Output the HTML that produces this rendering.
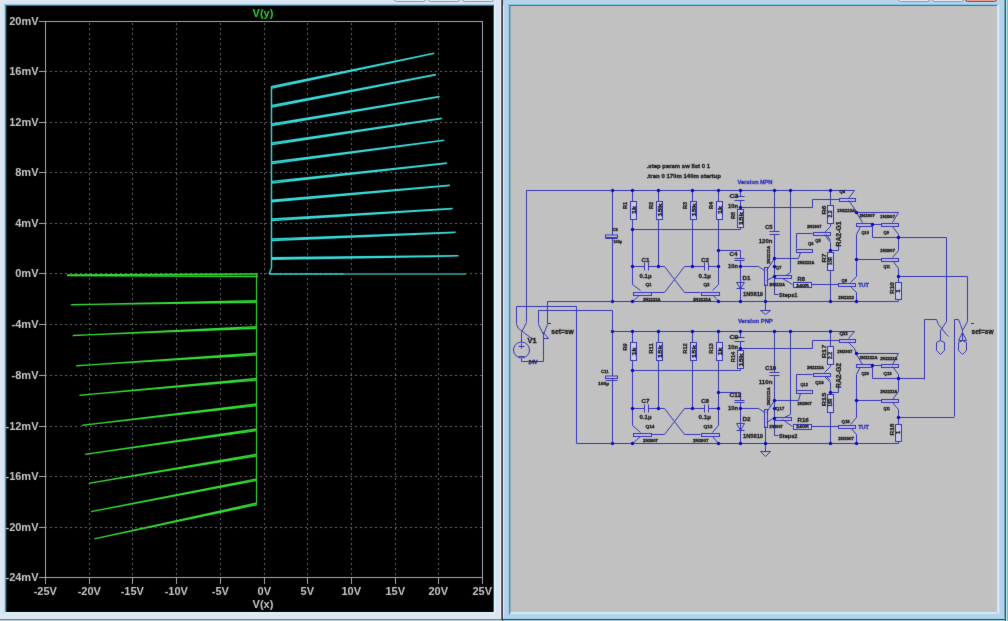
<!DOCTYPE html><html><head><meta charset="utf-8"><style>
html,body{margin:0;padding:0;background:#c6dcec;overflow:hidden}
svg{display:block}

text{font-family:"Liberation Sans",sans-serif}
</style></head><body>
<div id="w"><svg width="1008" height="621" viewBox="0 0 1008 621">
<defs><filter id="bl" color-interpolation-filters="sRGB" x="0" y="0" width="1008" height="621" filterUnits="userSpaceOnUse"><feConvolveMatrix order="3" kernelMatrix="0.01 0.06 0.01 0.06 0.72 0.06 0.01 0.06 0.01" edgeMode="duplicate" preserveAlpha="true"/></filter></defs><g filter="url(#bl)">

<rect x="0" y="0" width="1008" height="621" fill="#d8e4ee"/>
<rect x="0" y="0" width="501" height="619" fill="#dce5f0"/>
<rect x="3" y="3" width="1" height="610" fill="#cce8f4"/>
<rect x="4" y="4" width="1" height="609" fill="#b0e0fc"/>
<rect x="5" y="5" width="1" height="607" fill="#5a8aa0"/>
<rect x="6" y="6" width="1" height="606" fill="#1a2a2a"/>
<rect x="3" y="3" width="491" height="1" fill="#cde9f7"/>
<rect x="4" y="4" width="490" height="1" fill="#8ec8e6"/>
<rect x="5" y="5" width="489" height="1" fill="#3a7090"/>
<rect x="493" y="5" width="1" height="607" fill="#405060"/>
<rect x="494" y="5" width="1" height="608" fill="#e0fcff"/>
<rect x="495" y="5" width="1" height="608" fill="#d8eef0"/>
<rect x="498" y="0" width="2" height="619" fill="#e0e4fa"/>
<rect x="500" y="0" width="1" height="619" fill="#eef4fc"/>
<rect x="6" y="612" width="488" height="1" fill="#e0fcff"/>
<rect x="6" y="613" width="488" height="1" fill="#dcf2f8"/>
<rect x="0" y="618" width="501" height="1" fill="#e8ecfa"/>
<rect x="0" y="619" width="501" height="1" fill="#707888"/>
<rect x="0" y="620" width="502" height="1" fill="#b0d4dc"/>
<rect x="501" y="0" width="1" height="620" fill="#606868"/>
<rect x="502" y="0" width="1" height="621" fill="#383c40"/>
<rect x="394.5" y="-3.5" width="31" height="5" rx="2" fill="#e8edf5" stroke="#8a96a4" stroke-width="1"/>
<rect x="428.5" y="-3.5" width="31" height="5" rx="2" fill="#e8edf5" stroke="#8a96a4" stroke-width="1"/>
<rect x="462.5" y="-3.5" width="31" height="5" rx="2" fill="#e8edf5" stroke="#8a96a4" stroke-width="1"/>
<rect x="7" y="6" width="486" height="606" fill="#000"/>
<rect x="503" y="0" width="505" height="621" fill="#b8d0ec"/>
<rect x="503" y="0" width="1" height="620" fill="#eef2fc"/>
<rect x="507" y="0" width="1" height="620" fill="#b0d4ec"/>
<rect x="508" y="4" width="1" height="612" fill="#90d0ec"/>
<rect x="509" y="5" width="1" height="609" fill="#5090a0"/>
<rect x="510" y="6" width="1" height="606" fill="#90a8b0"/>
<rect x="503" y="0" width="502" height="5" fill="#b8d4e8"/>
<rect x="508" y="4" width="490" height="1" fill="#80c8e8"/>
<rect x="509" y="5" width="488" height="1" fill="#407090"/>
<rect x="997" y="5" width="1" height="608" fill="#d0e4f0"/>
<rect x="998" y="5" width="1" height="609" fill="#d0f0fc"/>
<rect x="999" y="5" width="1" height="609" fill="#b8dcf0"/>
<rect x="1003" y="0" width="1" height="620" fill="#b0d8ec"/>
<rect x="1004" y="0" width="1" height="620" fill="#70a8b8"/>
<rect x="1005" y="0" width="1" height="621" fill="#1a5060"/>
<rect x="1006" y="0" width="1" height="621" fill="#c8f4fc"/>
<rect x="1007" y="0" width="1" height="621" fill="#90b0c8"/>
<rect x="511" y="612" width="486" height="1" fill="#c8f0fa"/>
<rect x="511" y="613" width="486" height="1" fill="#c8ecf8"/>
<rect x="503" y="618" width="502" height="1" fill="#a8d8ec"/>
<rect x="503" y="619" width="502" height="1" fill="#0e4a5a"/>
<rect x="503" y="620" width="502" height="1" fill="#a8e0ea"/>
<rect x="898.5" y="-3.5" width="31" height="5" rx="2" fill="#e8edf5" stroke="#8a96a4" stroke-width="1"/>
<rect x="932.5" y="-3.5" width="31" height="5" rx="2" fill="#e8edf5" stroke="#8a96a4" stroke-width="1"/>
<rect x="965.5" y="-3.5" width="31" height="5" rx="2" fill="#eaa39c" stroke="#8a4a48" stroke-width="1"/>
<rect x="511" y="6" width="486" height="606" fill="#c1c1c1"/>
<line x1="46" y1="71.5" x2="482" y2="71.5" stroke="#626262" stroke-width="1" stroke-dasharray="2 3" stroke-dashoffset="-4"/>
<line x1="46" y1="122.5" x2="482" y2="122.5" stroke="#626262" stroke-width="1" stroke-dasharray="2 3" stroke-dashoffset="-4"/>
<line x1="46" y1="172.5" x2="482" y2="172.5" stroke="#626262" stroke-width="1" stroke-dasharray="2 3" stroke-dashoffset="-4"/>
<line x1="46" y1="223.5" x2="482" y2="223.5" stroke="#626262" stroke-width="1" stroke-dasharray="2 3" stroke-dashoffset="-4"/>
<line x1="46" y1="273.5" x2="482" y2="273.5" stroke="#626262" stroke-width="1" stroke-dasharray="2 3" stroke-dashoffset="-4"/>
<line x1="46" y1="324.5" x2="482" y2="324.5" stroke="#626262" stroke-width="1" stroke-dasharray="2 3" stroke-dashoffset="-4"/>
<line x1="46" y1="375.5" x2="482" y2="375.5" stroke="#626262" stroke-width="1" stroke-dasharray="2 3" stroke-dashoffset="-4"/>
<line x1="46" y1="426.5" x2="482" y2="426.5" stroke="#626262" stroke-width="1" stroke-dasharray="2 3" stroke-dashoffset="-4"/>
<line x1="46" y1="476.5" x2="482" y2="476.5" stroke="#626262" stroke-width="1" stroke-dasharray="2 3" stroke-dashoffset="-4"/>
<line x1="46" y1="527.5" x2="482" y2="527.5" stroke="#626262" stroke-width="1" stroke-dasharray="2 3" stroke-dashoffset="-4"/>
<line x1="89.5" y1="22" x2="89.5" y2="577" stroke="#626262" stroke-width="1" stroke-dasharray="2 3" stroke-dashoffset="-1"/>
<line x1="132.5" y1="22" x2="132.5" y2="577" stroke="#626262" stroke-width="1" stroke-dasharray="2 3" stroke-dashoffset="-1"/>
<line x1="176.5" y1="22" x2="176.5" y2="577" stroke="#626262" stroke-width="1" stroke-dasharray="2 3" stroke-dashoffset="-1"/>
<line x1="220.5" y1="22" x2="220.5" y2="577" stroke="#626262" stroke-width="1" stroke-dasharray="2 3" stroke-dashoffset="-1"/>
<line x1="264.5" y1="22" x2="264.5" y2="577" stroke="#626262" stroke-width="1" stroke-dasharray="2 3" stroke-dashoffset="-1"/>
<line x1="307.5" y1="22" x2="307.5" y2="577" stroke="#626262" stroke-width="1" stroke-dasharray="2 3" stroke-dashoffset="-1"/>
<line x1="351.5" y1="22" x2="351.5" y2="577" stroke="#626262" stroke-width="1" stroke-dasharray="2 3" stroke-dashoffset="-1"/>
<line x1="395.5" y1="22" x2="395.5" y2="577" stroke="#626262" stroke-width="1" stroke-dasharray="2 3" stroke-dashoffset="-1"/>
<line x1="438.5" y1="22" x2="438.5" y2="577" stroke="#626262" stroke-width="1" stroke-dasharray="2 3" stroke-dashoffset="-1"/>
<rect x="45.5" y="21.5" width="437" height="556" fill="none" stroke="#a8a8a8" stroke-width="1"/>
<line x1="39" y1="21.5" x2="45" y2="21.5" stroke="#a8a8a8" stroke-width="1"/>
<line x1="39" y1="71.5" x2="45" y2="71.5" stroke="#a8a8a8" stroke-width="1"/>
<line x1="39" y1="122.5" x2="45" y2="122.5" stroke="#a8a8a8" stroke-width="1"/>
<line x1="39" y1="172.5" x2="45" y2="172.5" stroke="#a8a8a8" stroke-width="1"/>
<line x1="39" y1="223.5" x2="45" y2="223.5" stroke="#a8a8a8" stroke-width="1"/>
<line x1="39" y1="273.5" x2="45" y2="273.5" stroke="#a8a8a8" stroke-width="1"/>
<line x1="39" y1="324.5" x2="45" y2="324.5" stroke="#a8a8a8" stroke-width="1"/>
<line x1="39" y1="375.5" x2="45" y2="375.5" stroke="#a8a8a8" stroke-width="1"/>
<line x1="39" y1="426.5" x2="45" y2="426.5" stroke="#a8a8a8" stroke-width="1"/>
<line x1="39" y1="476.5" x2="45" y2="476.5" stroke="#a8a8a8" stroke-width="1"/>
<line x1="39" y1="527.5" x2="45" y2="527.5" stroke="#a8a8a8" stroke-width="1"/>
<line x1="39" y1="577.5" x2="45" y2="577.5" stroke="#a8a8a8" stroke-width="1"/>
<line x1="45.5" y1="577" x2="45.5" y2="584" stroke="#a8a8a8" stroke-width="1"/>
<line x1="89.5" y1="577" x2="89.5" y2="584" stroke="#a8a8a8" stroke-width="1"/>
<line x1="132.5" y1="577" x2="132.5" y2="584" stroke="#a8a8a8" stroke-width="1"/>
<line x1="176.5" y1="577" x2="176.5" y2="584" stroke="#a8a8a8" stroke-width="1"/>
<line x1="220.5" y1="577" x2="220.5" y2="584" stroke="#a8a8a8" stroke-width="1"/>
<line x1="264.5" y1="577" x2="264.5" y2="584" stroke="#a8a8a8" stroke-width="1"/>
<line x1="307.5" y1="577" x2="307.5" y2="584" stroke="#a8a8a8" stroke-width="1"/>
<line x1="351.5" y1="577" x2="351.5" y2="584" stroke="#a8a8a8" stroke-width="1"/>
<line x1="395.5" y1="577" x2="395.5" y2="584" stroke="#a8a8a8" stroke-width="1"/>
<line x1="438.5" y1="577" x2="438.5" y2="584" stroke="#a8a8a8" stroke-width="1"/>
<line x1="482.5" y1="577" x2="482.5" y2="584" stroke="#a8a8a8" stroke-width="1"/>
<text x="38.5" y="24.6" font-size="11" fill="#c8c8c8" text-anchor="end" font-weight="bold">20mV</text>
<text x="38.5" y="74.6" font-size="11" fill="#c8c8c8" text-anchor="end" font-weight="bold">16mV</text>
<text x="38.5" y="125.6" font-size="11" fill="#c8c8c8" text-anchor="end" font-weight="bold">12mV</text>
<text x="38.5" y="175.6" font-size="11" fill="#c8c8c8" text-anchor="end" font-weight="bold">8mV</text>
<text x="38.5" y="226.6" font-size="11" fill="#c8c8c8" text-anchor="end" font-weight="bold">4mV</text>
<text x="38.5" y="276.6" font-size="11" fill="#c8c8c8" text-anchor="end" font-weight="bold">0mV</text>
<text x="38.5" y="327.6" font-size="11" fill="#c8c8c8" text-anchor="end" font-weight="bold">-4mV</text>
<text x="38.5" y="378.6" font-size="11" fill="#c8c8c8" text-anchor="end" font-weight="bold">-8mV</text>
<text x="38.5" y="429.6" font-size="11" fill="#c8c8c8" text-anchor="end" font-weight="bold">-12mV</text>
<text x="38.5" y="479.6" font-size="11" fill="#c8c8c8" text-anchor="end" font-weight="bold">-16mV</text>
<text x="38.5" y="530.6" font-size="11" fill="#c8c8c8" text-anchor="end" font-weight="bold">-20mV</text>
<text x="38.5" y="580.6" font-size="11" fill="#c8c8c8" text-anchor="end" font-weight="bold">-24mV</text>
<text x="45.3" y="594.5" font-size="11" fill="#c8c8c8" text-anchor="middle" font-weight="bold">-25V</text>
<text x="89.3" y="594.5" font-size="11" fill="#c8c8c8" text-anchor="middle" font-weight="bold">-20V</text>
<text x="132.3" y="594.5" font-size="11" fill="#c8c8c8" text-anchor="middle" font-weight="bold">-15V</text>
<text x="176.3" y="594.5" font-size="11" fill="#c8c8c8" text-anchor="middle" font-weight="bold">-10V</text>
<text x="220.3" y="594.5" font-size="11" fill="#c8c8c8" text-anchor="middle" font-weight="bold">-5V</text>
<text x="264.3" y="594.5" font-size="11" fill="#c8c8c8" text-anchor="middle" font-weight="bold">0V</text>
<text x="307.3" y="594.5" font-size="11" fill="#c8c8c8" text-anchor="middle" font-weight="bold">5V</text>
<text x="351.3" y="594.5" font-size="11" fill="#c8c8c8" text-anchor="middle" font-weight="bold">10V</text>
<text x="395.3" y="594.5" font-size="11" fill="#c8c8c8" text-anchor="middle" font-weight="bold">15V</text>
<text x="438.3" y="594.5" font-size="11" fill="#c8c8c8" text-anchor="middle" font-weight="bold">20V</text>
<text x="482.3" y="594.5" font-size="11" fill="#c8c8c8" text-anchor="middle" font-weight="bold">25V</text>
<text x="263" y="608.3" font-size="11" fill="#c8c8c8" text-anchor="middle" font-weight="bold">V(x)</text>
<text x="263" y="17" font-size="11" fill="#30d030" text-anchor="middle" font-weight="bold">V(y)</text>
<path d="M272,86.5 L434.4,53.1 M272,88.1 L434.4,53.4 M272,105.5 L435.9,74.4 M272,107.1 L435.9,74.7 M272,124 L439.6,96.4 M272,125.6 L439.6,96.7 M272,143 L441.9,118.3 M272,144.6 L441.9,118.6 M272,162 L444.4,140.1 M272,163.6 L444.4,140.4 M272,181.4 L447.2,163 M272,183.0 L447.2,163.3 M272,200.2 L450,185.2 M272,201.79999999999998 L450,185.5 M272,219 L452.8,208.5 M272,220.6 L452.8,208.8 M272,238.9 L455.6,232.3 M272,240.5 L455.6,232.60000000000002 M272,257.7 L458.5,255.7 M272,259.3 L458.5,256.0 " stroke="#38dcdc" stroke-width="1.4" fill="none"/>
<path d="M271.5,86 L271.5,268 L269,274" stroke="#38dcdc" stroke-width="1.4" fill="none"/>
<path d="M269,274 L344,274" stroke="#38dcdc" stroke-width="1.6" fill="none"/>
<path d="M344,274 L466,274" stroke="#2c7c7c" stroke-width="2" fill="none"/>
<path d="M70.8,304.9 L257,300.6 M71.8,304.7 L257,302.20000000000005 M72.6,335.6 L257,326.6 M73.6,335.40000000000003 L257,328.20000000000005 M76,365.8 L257,353.2 M77,365.6 L257,354.8 M79.4,395.3 L257,378.5 M80.4,395.1 L257,380.1 M82.1,425.4 L257,404 M83.1,425.2 L257,405.6 M85,454.3 L257,429 M86,454.1 L257,430.6 M88.8,483.3 L257,454.2 M89.8,483.1 L257,455.8 M91,511.6 L257,478.8 M92,511.40000000000003 L257,480.40000000000003 M94.2,538.9 L257,503 M95.2,538.6999999999999 L257,504.6 " stroke="#34dc34" stroke-width="1.35" fill="none"/>
<path d="M67,275 L258,274 M67,275.5 L258,276.5" stroke="#34dc34" stroke-width="1.3" fill="none"/>
<path d="M256.5,274 L256.5,503" stroke="#3ccc3c" stroke-width="1.2" fill="none"/>
<g stroke="#3636b8" stroke-width="1" fill="none">
<path d="M612.5,190.5 L854.5,190.5"/>
<path d="M612.5,190.5 L612.5,301.5"/>
<rect x="605.5" y="235" width="12" height="2.5" fill="#c1c1c1"/>
<path d="M605.5,238.5 L617.5,238.5"/>
<path d="M632.5,190.5 L632.5,284.5 L640.5,290.5"/>
<path d="M658.5,190.5 L658.5,266.5"/>
<path d="M692.5,190.5 L692.5,266.5"/>
<path d="M718.5,190.5 L718.5,284.5 L712.5,290.5"/>
<path d="M740.5,190.5 L740.5,196.5"/>
<path d="M740.5,200.5 L740.5,229.5"/>
<path d="M632.5,229.5 L740.5,229.5"/>
<path d="M740.5,207.5 L812.5,207.5 L812.5,199.5 L854.5,199.5"/>
<path d="M632.5,266.5 L644.5,266.5"/>
<path d="M648.5,266.5 L658.5,266.5"/>
<path d="M692.5,266.5 L704.5,266.5"/>
<path d="M708.5,266.5 L718.5,266.5"/>
<path d="M644.5,262.5 L644.5,270.5"/>
<path d="M648.5,262.5 L648.5,270.5"/>
<path d="M704.5,262.5 L704.5,270.5"/>
<path d="M708.5,262.5 L708.5,270.5"/>
<path d="M658.5,266.5 L664.5,266.5 L684.5,292.5 L700.5,292.5"/>
<path d="M692.5,266.5 L684.5,266.5 L664.5,292.5 L650.5,292.5"/>
<path d="M640.5,294.5 L632.5,301.5"/>
<path d="M712.5,294.5 L718.5,301.5"/>
<path d="M632.5,292.5 L632.5,292.5"/>
<path d="M718.5,250.5 L740.5,250.5 L740.5,258.5"/>
<path d="M740.5,260.5 L740.5,301.5"/>
<path d="M734.5,258.5 L744.5,258.5"/>
<path d="M734.5,260.5 L744.5,260.5"/>
<path d="M734.5,196.5 L744.5,196.5"/>
<path d="M734.5,200.5 L744.5,200.5"/>
<path d="M736.5,282.5 L744.5,282.5 L740.5,288.5 L736.5,282.5"/>
<path d="M736.5,288.5 L744.5,288.5"/>
<path d="M740.5,266.5 L758.5,266.5 L764.5,270.5"/>
<rect x="764.5" y="267.5" width="3" height="18" fill="#b8b8dc"/>
<path d="M765.5,284.5 L765.5,301.5"/>
<path d="M766.5,270.5 L774.5,258.5"/>
<path d="M766.5,280.5 L774.5,276.5"/>
<path d="M774.5,190.5 L774.5,231.5"/>
<path d="M774.5,234.5 L774.5,294.5 L778.5,294.5"/>
<path d="M769.5,231.5 L779.5,231.5"/>
<path d="M769.5,234.5 L779.5,234.5"/>
<path d="M790.5,190.5 L790.5,272.5 L784.5,276.5"/>
<rect x="774.5" y="275.5" width="17" height="3" fill="#b8b8dc"/>
<path d="M774.5,258.5 L798.5,258.5"/>
<path d="M782.5,278.5 L792.5,284.5"/>
<rect x="796.5" y="249.5" width="16" height="3" fill="#b8b8dc"/>
<rect x="813.5" y="232.5" width="17" height="3" fill="#b8b8dc"/>
<path d="M796.5,233.5 L796.5,248.5"/>
<path d="M796.5,233.5 L812.5,233.5"/>
<path d="M800.5,252.5 L798.5,258.5"/>
<path d="M826.5,234.5 L830.5,240.5"/>
<path d="M830.5,190.5 L830.5,226.5 L824.5,232.5"/>
<path d="M824.5,234.5 L830.5,242.5 L830.5,301.5"/>
<path d="M830.5,250.5 L838.5,250.5 L838.5,244.5"/>
<rect x="839.5" y="198.5" width="16" height="3" fill="#b8b8dc"/>
<path d="M854.5,190.5 L848.5,198.5"/>
<path d="M848.5,200.5 L854.5,208.5 L856.5,212.5 L862.5,222.5"/>
<path d="M860.5,226.5 L856.5,234.5 L856.5,276.5 L850.5,282.5"/>
<path d="M850.5,286.5 L856.5,292.5 L856.5,301.5"/>
<path d="M856.5,212.5 L898.5,212.5"/>
<rect x="856.5" y="223.5" width="16" height="3" fill="#b8b8dc"/>
<rect x="881.5" y="223.5" width="17" height="3" fill="#b8b8dc"/>
<path d="M872.5,224.5 L881.5,224.5"/>
<path d="M872.5,224.5 L872.5,237.5 L946.5,237.5"/>
<path d="M898.5,212.5 L892.5,222.5"/>
<path d="M892.5,226.5 L898.5,234.5 L898.5,250.5 L892.5,257.5"/>
<path d="M892.5,260.5 L898.5,268.5 L898.5,301.5"/>
<rect x="881.5" y="258.5" width="17" height="3" fill="#b8b8dc"/>
<path d="M856.5,259.5 L881.5,259.5"/>
<path d="M898.5,276.5 L967.5,276.5"/>
<path d="M810.5,284.5 L838.5,284.5"/>
<rect x="838.5" y="283.5" width="17" height="3" fill="#b8b8dc"/>
<path d="M612.5,301.5 L898.5,301.5"/>
<path d="M765.5,301.5 L765.5,310.5"/>
<path d="M760.5,310.5 L770.5,310.5 L765.5,314.5 L760.5,310.5"/>
<rect x="633.5" y="292.5" width="18" height="3" fill="#b8b8dc"/>
<rect x="701.5" y="292.5" width="18" height="3" fill="#b8b8dc"/>
<rect x="630.5" y="201.5" width="6" height="18" fill="#cacae0"/>
<rect x="656.5" y="201.5" width="6" height="18" fill="#cacae0"/>
<rect x="690.5" y="201.5" width="6" height="18" fill="#cacae0"/>
<rect x="716.5" y="201.5" width="6" height="18" fill="#cacae0"/>
<rect x="737.5" y="209.5" width="6" height="18" fill="#cacae0"/>
<rect x="827.5" y="205.5" width="6" height="18" fill="#cacae0"/>
<rect x="827.5" y="252.5" width="6" height="18" fill="#cacae0"/>
<rect x="895.5" y="282.5" width="6" height="17" fill="#cacae0"/>
<rect x="793.5" y="282.5" width="18" height="5" fill="#cacae0"/>
<circle cx="612.5" cy="190.5" r="1.7" fill="#0808c0" stroke="none"/>
<circle cx="632.5" cy="190.5" r="1.7" fill="#0808c0" stroke="none"/>
<circle cx="658.5" cy="190.5" r="1.7" fill="#0808c0" stroke="none"/>
<circle cx="692.5" cy="190.5" r="1.7" fill="#0808c0" stroke="none"/>
<circle cx="718.5" cy="190.5" r="1.7" fill="#0808c0" stroke="none"/>
<circle cx="740.5" cy="190.5" r="1.7" fill="#0808c0" stroke="none"/>
<circle cx="774.5" cy="190.5" r="1.7" fill="#0808c0" stroke="none"/>
<circle cx="790.5" cy="190.5" r="1.7" fill="#0808c0" stroke="none"/>
<circle cx="830.5" cy="190.5" r="1.7" fill="#0808c0" stroke="none"/>
<circle cx="632.5" cy="229.5" r="1.7" fill="#0808c0" stroke="none"/>
<circle cx="632.5" cy="266.5" r="1.7" fill="#0808c0" stroke="none"/>
<circle cx="658.5" cy="266.5" r="1.7" fill="#0808c0" stroke="none"/>
<circle cx="692.5" cy="266.5" r="1.7" fill="#0808c0" stroke="none"/>
<circle cx="718.5" cy="266.5" r="1.7" fill="#0808c0" stroke="none"/>
<circle cx="718.5" cy="250.5" r="1.7" fill="#0808c0" stroke="none"/>
<circle cx="740.5" cy="207.5" r="1.7" fill="#0808c0" stroke="none"/>
<circle cx="740.5" cy="266.5" r="1.7" fill="#0808c0" stroke="none"/>
<circle cx="774.5" cy="258.5" r="1.7" fill="#0808c0" stroke="none"/>
<circle cx="774.5" cy="266.5" r="1.7" fill="#0808c0" stroke="none"/>
<circle cx="774.5" cy="276.5" r="1.7" fill="#0808c0" stroke="none"/>
<circle cx="612.5" cy="301.5" r="1.7" fill="#0808c0" stroke="none"/>
<circle cx="632.5" cy="301.5" r="1.7" fill="#0808c0" stroke="none"/>
<circle cx="718.5" cy="301.5" r="1.7" fill="#0808c0" stroke="none"/>
<circle cx="740.5" cy="301.5" r="1.7" fill="#0808c0" stroke="none"/>
<circle cx="765.5" cy="301.5" r="1.7" fill="#0808c0" stroke="none"/>
<circle cx="830.5" cy="301.5" r="1.7" fill="#0808c0" stroke="none"/>
<circle cx="856.5" cy="301.5" r="1.7" fill="#0808c0" stroke="none"/>
<circle cx="856.5" cy="212.5" r="1.7" fill="#0808c0" stroke="none"/>
<circle cx="898.5" cy="237.5" r="1.7" fill="#0808c0" stroke="none"/>
<circle cx="898.5" cy="276.5" r="1.7" fill="#0808c0" stroke="none"/>
<circle cx="830.5" cy="250.5" r="1.7" fill="#0808c0" stroke="none"/>
<circle cx="872.5" cy="224.5" r="1.7" fill="#0808c0" stroke="none"/>
<circle cx="856.5" cy="259.5" r="1.7" fill="#0808c0" stroke="none"/>
<path d="M612.5,331.5 L854.5,331.5"/>
<path d="M612.5,331.5 L612.5,443.5"/>
<rect x="605.5" y="376" width="12" height="2.5" fill="#c1c1c1"/>
<path d="M605.5,380.5 L617.5,380.5"/>
<path d="M632.5,331.5 L632.5,425.5 L640.5,432.5"/>
<path d="M658.5,331.5 L658.5,408.5"/>
<path d="M692.5,331.5 L692.5,408.5"/>
<path d="M718.5,331.5 L718.5,425.5 L712.5,432.5"/>
<path d="M740.5,331.5 L740.5,337.5"/>
<path d="M740.5,341.5 L740.5,370.5"/>
<path d="M632.5,370.5 L740.5,370.5"/>
<path d="M740.5,348.5 L812.5,348.5 L812.5,340.5 L854.5,340.5"/>
<path d="M632.5,408.5 L644.5,408.5"/>
<path d="M648.5,408.5 L658.5,408.5"/>
<path d="M692.5,408.5 L704.5,408.5"/>
<path d="M708.5,408.5 L718.5,408.5"/>
<path d="M644.5,404.5 L644.5,412.5"/>
<path d="M648.5,404.5 L648.5,412.5"/>
<path d="M704.5,404.5 L704.5,412.5"/>
<path d="M708.5,404.5 L708.5,412.5"/>
<path d="M658.5,408.5 L664.5,408.5 L684.5,434.5 L700.5,434.5"/>
<path d="M692.5,408.5 L684.5,408.5 L664.5,434.5 L650.5,434.5"/>
<path d="M640.5,436.5 L632.5,443.5"/>
<path d="M712.5,436.5 L718.5,443.5"/>
<path d="M632.5,434.5 L632.5,434.5"/>
<path d="M718.5,392.5 L740.5,392.5 L740.5,400.5"/>
<path d="M740.5,402.5 L740.5,443.5"/>
<path d="M734.5,400.5 L744.5,400.5"/>
<path d="M734.5,402.5 L744.5,402.5"/>
<path d="M734.5,337.5 L744.5,337.5"/>
<path d="M734.5,341.5 L744.5,341.5"/>
<path d="M736.5,423.5 L744.5,423.5 L740.5,430.5 L736.5,423.5"/>
<path d="M736.5,430.5 L744.5,430.5"/>
<path d="M740.5,408.5 L758.5,408.5 L764.5,412.5"/>
<rect x="764.5" y="409.5" width="3" height="18" fill="#b8b8dc"/>
<path d="M765.5,426.5 L765.5,443.5"/>
<path d="M766.5,412.5 L774.5,400.5"/>
<path d="M766.5,422.5 L774.5,417.5"/>
<path d="M774.5,331.5 L774.5,372.5"/>
<path d="M774.5,375.5 L774.5,435.5 L778.5,435.5"/>
<path d="M769.5,372.5 L779.5,372.5"/>
<path d="M769.5,375.5 L779.5,375.5"/>
<path d="M790.5,331.5 L790.5,414.5 L784.5,417.5"/>
<rect x="774.5" y="417.5" width="17" height="3" fill="#b8b8dc"/>
<path d="M774.5,400.5 L798.5,400.5"/>
<path d="M782.5,419.5 L792.5,426.5"/>
<rect x="796.5" y="390.5" width="16" height="3" fill="#b8b8dc"/>
<rect x="813.5" y="373.5" width="17" height="3" fill="#b8b8dc"/>
<path d="M796.5,374.5 L796.5,390.5"/>
<path d="M796.5,374.5 L812.5,374.5"/>
<path d="M800.5,393.5 L798.5,400.5"/>
<path d="M826.5,376.5 L830.5,380.5"/>
<path d="M830.5,331.5 L830.5,366.5 L824.5,372.5"/>
<path d="M824.5,376.5 L830.5,382.5 L830.5,443.5"/>
<path d="M830.5,392.5 L838.5,392.5 L838.5,386.5"/>
<rect x="839.5" y="339.5" width="16" height="3" fill="#b8b8dc"/>
<path d="M854.5,331.5 L848.5,338.5"/>
<path d="M848.5,342.5 L854.5,348.5 L856.5,354.5 L862.5,364.5"/>
<path d="M860.5,366.5 L856.5,374.5 L856.5,417.5 L850.5,424.5"/>
<path d="M850.5,427.5 L856.5,434.5 L856.5,443.5"/>
<path d="M856.5,353.5 L898.5,353.5"/>
<rect x="856.5" y="364.5" width="16" height="3" fill="#b8b8dc"/>
<rect x="881.5" y="364.5" width="17" height="3" fill="#b8b8dc"/>
<path d="M872.5,365.5 L881.5,365.5"/>
<path d="M872.5,365.5 L872.5,378.5 L924.5,378.5"/>
<path d="M898.5,353.5 L892.5,364.5"/>
<path d="M892.5,366.5 L898.5,374.5 L898.5,391.5 L892.5,399.5"/>
<path d="M892.5,402.5 L898.5,409.5 L898.5,443.5"/>
<rect x="881.5" y="399.5" width="17" height="3" fill="#b8b8dc"/>
<path d="M856.5,400.5 L881.5,400.5"/>
<path d="M898.5,417.5 L954.5,417.5"/>
<path d="M810.5,426.5 L838.5,426.5"/>
<rect x="838.5" y="425.5" width="17" height="3" fill="#b8b8dc"/>
<path d="M612.5,443.5 L898.5,443.5"/>
<path d="M765.5,443.5 L765.5,451.5"/>
<path d="M760.5,451.5 L770.5,451.5 L765.5,456.5 L760.5,451.5"/>
<rect x="633.5" y="433.5" width="18" height="3" fill="#b8b8dc"/>
<rect x="701.5" y="433.5" width="18" height="3" fill="#b8b8dc"/>
<rect x="630.5" y="342.5" width="6" height="18" fill="#cacae0"/>
<rect x="656.5" y="342.5" width="6" height="18" fill="#cacae0"/>
<rect x="690.5" y="342.5" width="6" height="18" fill="#cacae0"/>
<rect x="716.5" y="342.5" width="6" height="18" fill="#cacae0"/>
<rect x="737.5" y="350.5" width="6" height="18" fill="#cacae0"/>
<rect x="827.5" y="346.5" width="6" height="18" fill="#cacae0"/>
<rect x="827.5" y="394.5" width="6" height="18" fill="#cacae0"/>
<rect x="895.5" y="424.5" width="6" height="17" fill="#cacae0"/>
<rect x="793.5" y="424.5" width="18" height="5" fill="#cacae0"/>
<circle cx="612.5" cy="331.5" r="1.7" fill="#0808c0" stroke="none"/>
<circle cx="632.5" cy="331.5" r="1.7" fill="#0808c0" stroke="none"/>
<circle cx="658.5" cy="331.5" r="1.7" fill="#0808c0" stroke="none"/>
<circle cx="692.5" cy="331.5" r="1.7" fill="#0808c0" stroke="none"/>
<circle cx="718.5" cy="331.5" r="1.7" fill="#0808c0" stroke="none"/>
<circle cx="740.5" cy="331.5" r="1.7" fill="#0808c0" stroke="none"/>
<circle cx="774.5" cy="331.5" r="1.7" fill="#0808c0" stroke="none"/>
<circle cx="790.5" cy="331.5" r="1.7" fill="#0808c0" stroke="none"/>
<circle cx="830.5" cy="331.5" r="1.7" fill="#0808c0" stroke="none"/>
<circle cx="632.5" cy="370.5" r="1.7" fill="#0808c0" stroke="none"/>
<circle cx="632.5" cy="408.5" r="1.7" fill="#0808c0" stroke="none"/>
<circle cx="658.5" cy="408.5" r="1.7" fill="#0808c0" stroke="none"/>
<circle cx="692.5" cy="408.5" r="1.7" fill="#0808c0" stroke="none"/>
<circle cx="718.5" cy="408.5" r="1.7" fill="#0808c0" stroke="none"/>
<circle cx="718.5" cy="392.5" r="1.7" fill="#0808c0" stroke="none"/>
<circle cx="740.5" cy="348.5" r="1.7" fill="#0808c0" stroke="none"/>
<circle cx="740.5" cy="408.5" r="1.7" fill="#0808c0" stroke="none"/>
<circle cx="774.5" cy="400.5" r="1.7" fill="#0808c0" stroke="none"/>
<circle cx="774.5" cy="408.5" r="1.7" fill="#0808c0" stroke="none"/>
<circle cx="774.5" cy="418.5" r="1.7" fill="#0808c0" stroke="none"/>
<circle cx="612.5" cy="443.5" r="1.7" fill="#0808c0" stroke="none"/>
<circle cx="632.5" cy="443.5" r="1.7" fill="#0808c0" stroke="none"/>
<circle cx="718.5" cy="443.5" r="1.7" fill="#0808c0" stroke="none"/>
<circle cx="740.5" cy="443.5" r="1.7" fill="#0808c0" stroke="none"/>
<circle cx="765.5" cy="443.5" r="1.7" fill="#0808c0" stroke="none"/>
<circle cx="830.5" cy="443.5" r="1.7" fill="#0808c0" stroke="none"/>
<circle cx="856.5" cy="443.5" r="1.7" fill="#0808c0" stroke="none"/>
<circle cx="856.5" cy="353.5" r="1.7" fill="#0808c0" stroke="none"/>
<circle cx="898.5" cy="378.5" r="1.7" fill="#0808c0" stroke="none"/>
<circle cx="898.5" cy="417.5" r="1.7" fill="#0808c0" stroke="none"/>
<circle cx="830.5" cy="392.5" r="1.7" fill="#0808c0" stroke="none"/>
<circle cx="872.5" cy="365.5" r="1.7" fill="#0808c0" stroke="none"/>
<circle cx="856.5" cy="400.5" r="1.7" fill="#0808c0" stroke="none"/>
<path d="M526.5,190.5 L612.5,190.5"/>
<path d="M526.5,190.5 L526.5,321.5"/>
<path d="M516.5,323.5 L516.5,306.5 L576.5,306.5 L576.5,443.5"/>
<path d="M576.5,443.5 L612.5,443.5"/>
<path d="M547.5,323.5 L547.5,301.5 L612.5,301.5"/>
<path d="M538.5,323.5 L538.5,310.5 L612.5,310.5 L612.5,332.5"/>
<path d="M516.5,323.5 L516.5,324.5 L518.5,328.5 L534.5,340.5"/>
<path d="M526.5,321.5 L526.5,322.5 L521.5,332.5 L521.5,342.5"/>
<circle cx="521.5" cy="350" r="8"/>
<path d="M518.5,346.5 L524.5,346.5"/>
<path d="M521.5,343.5 L521.5,348.5"/>
<path d="M518.5,356.5 L524.5,356.5"/>
<path d="M521.5,358.5 L521.5,361.5 L543.5,361.5 L543.5,338.5"/>
<path d="M538.5,323.5 L538.5,324.5 L543.5,334.5"/>
<path d="M547.5,323.5 L547.5,324.5 L543.5,334.5"/>
<path d="M543.5,332.5 L548.5,338.5 L543.5,338.5 L543.5,332.5"/>
<path d="M946.5,237.5 L946.5,321.5 L940.5,330.5"/>
<path d="M967.5,276.5 L967.5,321.5 L962.5,330.5"/>
<path d="M924.5,379.5 L924.5,319.5 L936.5,319.5 L938.5,324.5 L946.5,334.5 L948.5,336.5"/>
<path d="M954.5,416.5 L954.5,319.5 L958.5,319.5 L960.5,324.5 L962.5,330.5"/>
<path d="M940.5,330.5 L940.5,340.5"/>
<path d="M962.5,330.5 L962.5,340.5"/>
<path d="M940.5,340.5 L944.5,342.5 L944.5,350.5 L940.5,354.5 L936.5,350.5 L936.5,342.5 L940.5,340.5"/>
<path d="M962.5,340.5 L966.5,342.5 L966.5,350.5 L962.5,354.5 L958.5,350.5 L958.5,342.5 L962.5,340.5"/>
<path d="M958.5,340.5 L966.5,340.5 L962.5,332.5 L958.5,340.5"/>
</g>
<g font-family="Liberation Sans" font-weight="bold">
<text x="0" y="0" font-size="5.6" textLength="7" lengthAdjust="spacingAndGlyphs" fill="#1c1c1c" stroke="#1c1c1c" stroke-width="0.3" text-anchor="middle" transform="translate(625.2,205.5) rotate(-90)" dy="2.016">R1</text>
<text x="0" y="0" font-size="5.5" textLength="8" lengthAdjust="spacingAndGlyphs" fill="#141414" stroke="#141414" stroke-width="0.3" text-anchor="middle" transform="translate(633.6,210) rotate(-90)" dy="1.98">1k</text>
<text x="0" y="0" font-size="5.6" textLength="7" lengthAdjust="spacingAndGlyphs" fill="#1c1c1c" stroke="#1c1c1c" stroke-width="0.3" text-anchor="middle" transform="translate(651.2,205.5) rotate(-90)" dy="2.016">R2</text>
<text x="0" y="0" font-size="5.5" textLength="13" lengthAdjust="spacingAndGlyphs" fill="#141414" stroke="#141414" stroke-width="0.3" text-anchor="middle" transform="translate(659.6,210) rotate(-90)" dy="1.98">15k</text>
<text x="0" y="0" font-size="5.6" textLength="7" lengthAdjust="spacingAndGlyphs" fill="#1c1c1c" stroke="#1c1c1c" stroke-width="0.3" text-anchor="middle" transform="translate(685.2,205.5) rotate(-90)" dy="2.016">R3</text>
<text x="0" y="0" font-size="5.5" textLength="13" lengthAdjust="spacingAndGlyphs" fill="#141414" stroke="#141414" stroke-width="0.3" text-anchor="middle" transform="translate(693.6,210) rotate(-90)" dy="1.98">15k</text>
<text x="0" y="0" font-size="5.6" textLength="7" lengthAdjust="spacingAndGlyphs" fill="#1c1c1c" stroke="#1c1c1c" stroke-width="0.3" text-anchor="middle" transform="translate(711.2,205.5) rotate(-90)" dy="2.016">R4</text>
<text x="0" y="0" font-size="5.5" textLength="8" lengthAdjust="spacingAndGlyphs" fill="#141414" stroke="#141414" stroke-width="0.3" text-anchor="middle" transform="translate(719.6,210) rotate(-90)" dy="1.98">1k</text>
<text x="0" y="0" font-size="5.6" textLength="7.0" lengthAdjust="spacingAndGlyphs" fill="#1c1c1c" stroke="#1c1c1c" stroke-width="0.3" text-anchor="middle" transform="translate(732.5,215.5) rotate(-90)" dy="2.016">R5</text>
<text x="0" y="0" font-size="5.5" textLength="13" lengthAdjust="spacingAndGlyphs" fill="#141414" stroke="#141414" stroke-width="0.3" text-anchor="middle" transform="translate(741,218.5) rotate(-90)" dy="1.98">15k</text>
<text x="729.5" y="197.5" font-size="6" textLength="9.0" lengthAdjust="spacingAndGlyphs" fill="#1c1c1c" stroke="#1c1c1c" stroke-width="0.3">C3</text>
<text x="728" y="207.5" font-size="6" textLength="10.0" lengthAdjust="spacingAndGlyphs" fill="#1c1c1c" stroke="#1c1c1c" stroke-width="0.3">10n</text>
<text x="612.5" y="230.5" font-size="4" textLength="5.5" lengthAdjust="spacingAndGlyphs" fill="#1c1c1c" stroke="#1c1c1c" stroke-width="0.3">C6</text>
<text x="613.5" y="242.5" font-size="3.8" textLength="8.5" lengthAdjust="spacingAndGlyphs" fill="#1c1c1c" stroke="#1c1c1c" stroke-width="0.3">100µ</text>
<text x="641.5" y="261.5" font-size="6" textLength="8.0" lengthAdjust="spacingAndGlyphs" fill="#1c1c1c" stroke="#1c1c1c" stroke-width="0.3">C1</text>
<text x="701" y="261.5" font-size="6" textLength="8.0" lengthAdjust="spacingAndGlyphs" fill="#1c1c1c" stroke="#1c1c1c" stroke-width="0.3">C2</text>
<text x="639.5" y="277.5" font-size="6" textLength="12.0" lengthAdjust="spacingAndGlyphs" fill="#1c1c1c" stroke="#1c1c1c" stroke-width="0.3">0.1µ</text>
<text x="698.5" y="277.5" font-size="6" textLength="12.5" lengthAdjust="spacingAndGlyphs" fill="#1c1c1c" stroke="#1c1c1c" stroke-width="0.3">0.1µ</text>
<text x="645.5" y="286" font-size="4.2" textLength="6.0" lengthAdjust="spacingAndGlyphs" fill="#1c1c1c" stroke="#1c1c1c" stroke-width="0.3">Q1</text>
<text x="703.5" y="286" font-size="4.2" textLength="6.0" lengthAdjust="spacingAndGlyphs" fill="#1c1c1c" stroke="#1c1c1c" stroke-width="0.3">Q2</text>
<text x="643" y="300.5" font-size="3.8" textLength="17.5" lengthAdjust="spacingAndGlyphs" fill="#1c1c1c" stroke="#1c1c1c" stroke-width="0.3">2N2222A</text>
<text x="693" y="300.5" font-size="3.8" textLength="18.0" lengthAdjust="spacingAndGlyphs" fill="#1c1c1c" stroke="#1c1c1c" stroke-width="0.3">2N2222A</text>
<text x="729.5" y="255.5" font-size="6" textLength="8.0" lengthAdjust="spacingAndGlyphs" fill="#1c1c1c" stroke="#1c1c1c" stroke-width="0.3">C4</text>
<text x="728" y="268" font-size="6" textLength="10" lengthAdjust="spacingAndGlyphs" fill="#1c1c1c" stroke="#1c1c1c" stroke-width="0.3">10n</text>
<text x="742.5" y="279.5" font-size="6" textLength="8.0" lengthAdjust="spacingAndGlyphs" fill="#1c1c1c" stroke="#1c1c1c" stroke-width="0.3">D1</text>
<text x="743" y="296" font-size="6" textLength="20" lengthAdjust="spacingAndGlyphs" fill="#1c1c1c" stroke="#1c1c1c" stroke-width="0.3">1N5819</text>
<text x="765" y="228.8" font-size="6" textLength="7.5" lengthAdjust="spacingAndGlyphs" fill="#1c1c1c" stroke="#1c1c1c" stroke-width="0.3">C5</text>
<text x="758.8" y="242.8" font-size="6" textLength="13.600000000000023" lengthAdjust="spacingAndGlyphs" fill="#1c1c1c" stroke="#1c1c1c" stroke-width="0.3">120n</text>
<text x="0" y="0" font-size="6" textLength="9.0" lengthAdjust="spacingAndGlyphs" fill="#1c1c1c" stroke="#1c1c1c" stroke-width="0.3" text-anchor="middle" transform="translate(823.7,210) rotate(-90)" dy="2.16">R6</text>
<text x="0" y="0" font-size="4.5" textLength="7" lengthAdjust="spacingAndGlyphs" fill="#1c1c1c" stroke="#1c1c1c" stroke-width="0.3" text-anchor="middle" transform="translate(830.3,214) rotate(-90)" dy="1.6199999999999999">2.2</text>
<text x="0" y="0" font-size="6" textLength="9.0" lengthAdjust="spacingAndGlyphs" fill="#1c1c1c" stroke="#1c1c1c" stroke-width="0.3" text-anchor="middle" transform="translate(823.7,258) rotate(-90)" dy="2.16">R7</text>
<text x="0" y="0" font-size="4.5" textLength="8" lengthAdjust="spacingAndGlyphs" fill="#1c1c1c" stroke="#1c1c1c" stroke-width="0.3" text-anchor="middle" transform="translate(830.3,261) rotate(-90)" dy="1.6199999999999999">15R</text>
<text x="0" y="0" font-size="6.5" textLength="25.0" lengthAdjust="spacingAndGlyphs" fill="#1c1c1c" stroke="#1c1c1c" stroke-width="0.3" text-anchor="middle" transform="translate(838.8,234) rotate(-90)" dy="2.34">RA2-G1</text>
<text x="807" y="227.5" font-size="3.8" textLength="14.5" lengthAdjust="spacingAndGlyphs" fill="#1c1c1c" stroke="#1c1c1c" stroke-width="0.3">2N3907</text>
<text x="815.3" y="242" font-size="4" textLength="5.7000000000000455" lengthAdjust="spacingAndGlyphs" fill="#1c1c1c" stroke="#1c1c1c" stroke-width="0.3">Q5</text>
<text x="808" y="244.5" font-size="4" textLength="5.5" lengthAdjust="spacingAndGlyphs" fill="#1c1c1c" stroke="#1c1c1c" stroke-width="0.3">Q6</text>
<text x="797.5" y="263.5" font-size="3.8" textLength="16.799999999999955" lengthAdjust="spacingAndGlyphs" fill="#1c1c1c" stroke="#1c1c1c" stroke-width="0.3">2N2222A</text>
<text x="0" y="0" font-size="3.8" textLength="18" lengthAdjust="spacingAndGlyphs" fill="#1c1c1c" stroke="#1c1c1c" stroke-width="0.3" text-anchor="middle" transform="translate(769,255) rotate(-90)" dy="1.3679999999999999">2N2222A</text>
<text x="775.6" y="268.5" font-size="4" textLength="5.899999999999977" lengthAdjust="spacingAndGlyphs" fill="#1c1c1c" stroke="#1c1c1c" stroke-width="0.3">Q7</text>
<text x="769.3" y="286" font-size="3.8" textLength="15.700000000000045" lengthAdjust="spacingAndGlyphs" fill="#1c1c1c" stroke="#1c1c1c" stroke-width="0.3">2N2222A</text>
<text x="797.5" y="280.5" font-size="6" textLength="7.5" lengthAdjust="spacingAndGlyphs" fill="#1c1c1c" stroke="#1c1c1c" stroke-width="0.3">R8</text>
<text x="796" y="286.7" font-size="4.3" textLength="13" lengthAdjust="spacingAndGlyphs" fill="#1c1c1c" stroke="#1c1c1c" stroke-width="0.3">240R</text>
<text x="779" y="296.5" font-size="6" textLength="18.5" lengthAdjust="spacingAndGlyphs" fill="#1c1c1c" stroke="#1c1c1c" stroke-width="0.3">Steps1</text>
<text x="841.5" y="281.5" font-size="4" textLength="5.5" lengthAdjust="spacingAndGlyphs" fill="#1c1c1c" stroke="#1c1c1c" stroke-width="0.3">Q8</text>
<text x="858.2" y="287" font-size="6" textLength="10.799999999999955" lengthAdjust="spacingAndGlyphs" fill="#3030c0" stroke="#3030c0" stroke-width="0.3">TUT</text>
<text x="838.3" y="298.5" font-size="3.8" textLength="15.700000000000045" lengthAdjust="spacingAndGlyphs" fill="#1c1c1c" stroke="#1c1c1c" stroke-width="0.3">2N2222</text>
<text x="839.4" y="193" font-size="4" textLength="5.600000000000023" lengthAdjust="spacingAndGlyphs" fill="#1c1c1c" stroke="#1c1c1c" stroke-width="0.3">Q4</text>
<text x="837.3" y="211.5" font-size="3.8" textLength="17.700000000000045" lengthAdjust="spacingAndGlyphs" fill="#1c1c1c" stroke="#1c1c1c" stroke-width="0.3">2N2222A</text>
<text x="859.4" y="217" font-size="3.8" textLength="15.600000000000023" lengthAdjust="spacingAndGlyphs" fill="#1c1c1c" stroke="#1c1c1c" stroke-width="0.3">2N3907</text>
<text x="880.3" y="218" font-size="3.8" textLength="14.700000000000045" lengthAdjust="spacingAndGlyphs" fill="#1c1c1c" stroke="#1c1c1c" stroke-width="0.3">2N3907</text>
<text x="861.5" y="233.5" font-size="4" textLength="7.5" lengthAdjust="spacingAndGlyphs" fill="#1c1c1c" stroke="#1c1c1c" stroke-width="0.3">Q10</text>
<text x="883.5" y="233.5" font-size="4" textLength="5.5" lengthAdjust="spacingAndGlyphs" fill="#1c1c1c" stroke="#1c1c1c" stroke-width="0.3">Q9</text>
<text x="880.3" y="251.5" font-size="3.8" textLength="14.700000000000045" lengthAdjust="spacingAndGlyphs" fill="#1c1c1c" stroke="#1c1c1c" stroke-width="0.3">2N3907</text>
<text x="883.5" y="268" font-size="4" textLength="6.5" lengthAdjust="spacingAndGlyphs" fill="#1c1c1c" stroke="#1c1c1c" stroke-width="0.3">Q11</text>
<text x="0" y="0" font-size="6" textLength="12.0" lengthAdjust="spacingAndGlyphs" fill="#1c1c1c" stroke="#1c1c1c" stroke-width="0.3" text-anchor="middle" transform="translate(891.8,288) rotate(-90)" dy="2.16">R10</text>
<text x="0" y="0" font-size="4.5" textLength="3" lengthAdjust="spacingAndGlyphs" fill="#1c1c1c" stroke="#1c1c1c" stroke-width="0.3" text-anchor="middle" transform="translate(898.8,291) rotate(-90)" dy="1.6199999999999999">1</text>
<text x="0" y="0" font-size="5.6" textLength="7" lengthAdjust="spacingAndGlyphs" fill="#1c1c1c" stroke="#1c1c1c" stroke-width="0.3" text-anchor="middle" transform="translate(625.2,347.0) rotate(-90)" dy="2.016">R9</text>
<text x="0" y="0" font-size="5.5" textLength="8" lengthAdjust="spacingAndGlyphs" fill="#141414" stroke="#141414" stroke-width="0.3" text-anchor="middle" transform="translate(633.6,351.5) rotate(-90)" dy="1.98">1k</text>
<text x="0" y="0" font-size="5.6" textLength="10.5" lengthAdjust="spacingAndGlyphs" fill="#1c1c1c" stroke="#1c1c1c" stroke-width="0.3" text-anchor="middle" transform="translate(651.2,348.5) rotate(-90)" dy="2.016">R11</text>
<text x="0" y="0" font-size="5.5" textLength="13" lengthAdjust="spacingAndGlyphs" fill="#141414" stroke="#141414" stroke-width="0.3" text-anchor="middle" transform="translate(659.6,351.5) rotate(-90)" dy="1.98">15k</text>
<text x="0" y="0" font-size="5.6" textLength="10.5" lengthAdjust="spacingAndGlyphs" fill="#1c1c1c" stroke="#1c1c1c" stroke-width="0.3" text-anchor="middle" transform="translate(685.2,348.5) rotate(-90)" dy="2.016">R12</text>
<text x="0" y="0" font-size="5.5" textLength="13" lengthAdjust="spacingAndGlyphs" fill="#141414" stroke="#141414" stroke-width="0.3" text-anchor="middle" transform="translate(693.6,351.5) rotate(-90)" dy="1.98">15k</text>
<text x="0" y="0" font-size="5.6" textLength="10.5" lengthAdjust="spacingAndGlyphs" fill="#1c1c1c" stroke="#1c1c1c" stroke-width="0.3" text-anchor="middle" transform="translate(711.2,348.5) rotate(-90)" dy="2.016">R13</text>
<text x="0" y="0" font-size="5.5" textLength="8" lengthAdjust="spacingAndGlyphs" fill="#141414" stroke="#141414" stroke-width="0.3" text-anchor="middle" transform="translate(719.6,351.5) rotate(-90)" dy="1.98">1k</text>
<text x="0" y="0" font-size="5.6" textLength="10.5" lengthAdjust="spacingAndGlyphs" fill="#1c1c1c" stroke="#1c1c1c" stroke-width="0.3" text-anchor="middle" transform="translate(732.5,357.0) rotate(-90)" dy="2.016">R14</text>
<text x="0" y="0" font-size="5.5" textLength="13" lengthAdjust="spacingAndGlyphs" fill="#141414" stroke="#141414" stroke-width="0.3" text-anchor="middle" transform="translate(741,360.0) rotate(-90)" dy="1.98">15k</text>
<text x="729.5" y="339.0" font-size="6" textLength="9.0" lengthAdjust="spacingAndGlyphs" fill="#1c1c1c" stroke="#1c1c1c" stroke-width="0.3">C9</text>
<text x="728" y="349.0" font-size="6" textLength="10.0" lengthAdjust="spacingAndGlyphs" fill="#1c1c1c" stroke="#1c1c1c" stroke-width="0.3">10n</text>
<text x="601" y="372.5" font-size="4" textLength="7.5" lengthAdjust="spacingAndGlyphs" fill="#1c1c1c" stroke="#1c1c1c" stroke-width="0.3">C11</text>
<text x="598" y="384.8" font-size="3.8" textLength="11" lengthAdjust="spacingAndGlyphs" fill="#1c1c1c" stroke="#1c1c1c" stroke-width="0.3">100µ</text>
<text x="641.5" y="403.0" font-size="6" textLength="8.0" lengthAdjust="spacingAndGlyphs" fill="#1c1c1c" stroke="#1c1c1c" stroke-width="0.3">C7</text>
<text x="701" y="403.0" font-size="6" textLength="8.0" lengthAdjust="spacingAndGlyphs" fill="#1c1c1c" stroke="#1c1c1c" stroke-width="0.3">C8</text>
<text x="639.5" y="419.0" font-size="6" textLength="12.0" lengthAdjust="spacingAndGlyphs" fill="#1c1c1c" stroke="#1c1c1c" stroke-width="0.3">0.1µ</text>
<text x="698.5" y="419.0" font-size="6" textLength="12.5" lengthAdjust="spacingAndGlyphs" fill="#1c1c1c" stroke="#1c1c1c" stroke-width="0.3">0.1µ</text>
<text x="645.5" y="427.5" font-size="4.2" textLength="9.0" lengthAdjust="spacingAndGlyphs" fill="#1c1c1c" stroke="#1c1c1c" stroke-width="0.3">Q14</text>
<text x="703.5" y="427.5" font-size="4.2" textLength="9.0" lengthAdjust="spacingAndGlyphs" fill="#1c1c1c" stroke="#1c1c1c" stroke-width="0.3">Q13</text>
<text x="643" y="442.0" font-size="3.8" textLength="15.0" lengthAdjust="spacingAndGlyphs" fill="#1c1c1c" stroke="#1c1c1c" stroke-width="0.3">2N3907</text>
<text x="693" y="442.0" font-size="3.8" textLength="15.428571428571429" lengthAdjust="spacingAndGlyphs" fill="#1c1c1c" stroke="#1c1c1c" stroke-width="0.3">2N3907</text>
<text x="729.5" y="397.0" font-size="6" textLength="12.0" lengthAdjust="spacingAndGlyphs" fill="#1c1c1c" stroke="#1c1c1c" stroke-width="0.3">C12</text>
<text x="728" y="409.5" font-size="6" textLength="10" lengthAdjust="spacingAndGlyphs" fill="#1c1c1c" stroke="#1c1c1c" stroke-width="0.3">10n</text>
<text x="742.5" y="421.0" font-size="6" textLength="8.0" lengthAdjust="spacingAndGlyphs" fill="#1c1c1c" stroke="#1c1c1c" stroke-width="0.3">D2</text>
<text x="743" y="437.5" font-size="6" textLength="20" lengthAdjust="spacingAndGlyphs" fill="#1c1c1c" stroke="#1c1c1c" stroke-width="0.3">1N5819</text>
<text x="765" y="370.3" font-size="6" textLength="11.25" lengthAdjust="spacingAndGlyphs" fill="#1c1c1c" stroke="#1c1c1c" stroke-width="0.3">C10</text>
<text x="758.8" y="384.3" font-size="6" textLength="13.600000000000023" lengthAdjust="spacingAndGlyphs" fill="#1c1c1c" stroke="#1c1c1c" stroke-width="0.3">110n</text>
<text x="0" y="0" font-size="6" textLength="13.5" lengthAdjust="spacingAndGlyphs" fill="#1c1c1c" stroke="#1c1c1c" stroke-width="0.3" text-anchor="middle" transform="translate(823.7,351.5) rotate(-90)" dy="2.16">R17</text>
<text x="0" y="0" font-size="4.5" textLength="7" lengthAdjust="spacingAndGlyphs" fill="#1c1c1c" stroke="#1c1c1c" stroke-width="0.3" text-anchor="middle" transform="translate(830.3,355.5) rotate(-90)" dy="1.6199999999999999">2.2</text>
<text x="0" y="0" font-size="6" textLength="13.5" lengthAdjust="spacingAndGlyphs" fill="#1c1c1c" stroke="#1c1c1c" stroke-width="0.3" text-anchor="middle" transform="translate(823.7,399.5) rotate(-90)" dy="2.16">R15</text>
<text x="0" y="0" font-size="4.5" textLength="8" lengthAdjust="spacingAndGlyphs" fill="#1c1c1c" stroke="#1c1c1c" stroke-width="0.3" text-anchor="middle" transform="translate(830.3,402.5) rotate(-90)" dy="1.6199999999999999">15R</text>
<text x="0" y="0" font-size="6.5" textLength="25.0" lengthAdjust="spacingAndGlyphs" fill="#1c1c1c" stroke="#1c1c1c" stroke-width="0.3" text-anchor="middle" transform="translate(838.8,375.5) rotate(-90)" dy="2.34">RA2-G2</text>
<text x="807" y="369.0" font-size="3.8" textLength="16.916666666666668" lengthAdjust="spacingAndGlyphs" fill="#1c1c1c" stroke="#1c1c1c" stroke-width="0.3">2N2222A</text>
<text x="815.3" y="383.5" font-size="4" textLength="8.550000000000068" lengthAdjust="spacingAndGlyphs" fill="#1c1c1c" stroke="#1c1c1c" stroke-width="0.3">Q16</text>
<text x="800.5" y="386.0" font-size="4" textLength="7.5" lengthAdjust="spacingAndGlyphs" fill="#1c1c1c" stroke="#1c1c1c" stroke-width="0.3">Q12</text>
<text x="797.5" y="405.0" font-size="3.8" textLength="14.399999999999961" lengthAdjust="spacingAndGlyphs" fill="#1c1c1c" stroke="#1c1c1c" stroke-width="0.3">2N3907</text>
<text x="0" y="0" font-size="3.8" textLength="18" lengthAdjust="spacingAndGlyphs" fill="#1c1c1c" stroke="#1c1c1c" stroke-width="0.3" text-anchor="middle" transform="translate(769,396.5) rotate(-90)" dy="1.3679999999999999">2N2222A</text>
<text x="775.6" y="410.0" font-size="4" textLength="8.849999999999966" lengthAdjust="spacingAndGlyphs" fill="#1c1c1c" stroke="#1c1c1c" stroke-width="0.3">Q17</text>
<text x="769.3" y="427.5" font-size="3.8" textLength="13.457142857142896" lengthAdjust="spacingAndGlyphs" fill="#1c1c1c" stroke="#1c1c1c" stroke-width="0.3">2N3907</text>
<text x="797.5" y="422.0" font-size="6" textLength="11.25" lengthAdjust="spacingAndGlyphs" fill="#1c1c1c" stroke="#1c1c1c" stroke-width="0.3">R16</text>
<text x="796" y="428.2" font-size="4.3" textLength="13" lengthAdjust="spacingAndGlyphs" fill="#1c1c1c" stroke="#1c1c1c" stroke-width="0.3">240R</text>
<text x="779" y="438.0" font-size="6" textLength="18.5" lengthAdjust="spacingAndGlyphs" fill="#1c1c1c" stroke="#1c1c1c" stroke-width="0.3">Steps2</text>
<text x="841.5" y="423.0" font-size="4" textLength="8.25" lengthAdjust="spacingAndGlyphs" fill="#1c1c1c" stroke="#1c1c1c" stroke-width="0.3">Q18</text>
<text x="858.2" y="428.5" font-size="6" textLength="10.799999999999955" lengthAdjust="spacingAndGlyphs" fill="#3030c0" stroke="#3030c0" stroke-width="0.3">TUT</text>
<text x="838.3" y="440.0" font-size="3.8" textLength="15.700000000000045" lengthAdjust="spacingAndGlyphs" fill="#1c1c1c" stroke="#1c1c1c" stroke-width="0.3">2N3907</text>
<text x="839.4" y="334.5" font-size="4" textLength="8.400000000000034" lengthAdjust="spacingAndGlyphs" fill="#1c1c1c" stroke="#1c1c1c" stroke-width="0.3">Q22</text>
<text x="837.3" y="353.0" font-size="3.8" textLength="15.17142857142861" lengthAdjust="spacingAndGlyphs" fill="#1c1c1c" stroke="#1c1c1c" stroke-width="0.3">2N3907</text>
<text x="859.4" y="358.5" font-size="3.8" textLength="18.200000000000028" lengthAdjust="spacingAndGlyphs" fill="#1c1c1c" stroke="#1c1c1c" stroke-width="0.3">2N2222A</text>
<text x="880.3" y="359.5" font-size="3.8" textLength="17.150000000000052" lengthAdjust="spacingAndGlyphs" fill="#1c1c1c" stroke="#1c1c1c" stroke-width="0.3">2N2222A</text>
<text x="861.5" y="375.0" font-size="4" textLength="7.5" lengthAdjust="spacingAndGlyphs" fill="#1c1c1c" stroke="#1c1c1c" stroke-width="0.3">Q20</text>
<text x="883.5" y="375.0" font-size="4" textLength="8.25" lengthAdjust="spacingAndGlyphs" fill="#1c1c1c" stroke="#1c1c1c" stroke-width="0.3">Q19</text>
<text x="880.3" y="393.0" font-size="3.8" textLength="17.150000000000052" lengthAdjust="spacingAndGlyphs" fill="#1c1c1c" stroke="#1c1c1c" stroke-width="0.3">2N2222A</text>
<text x="883.5" y="409.5" font-size="4" textLength="6.5" lengthAdjust="spacingAndGlyphs" fill="#1c1c1c" stroke="#1c1c1c" stroke-width="0.3">Q21</text>
<text x="0" y="0" font-size="6" textLength="12.0" lengthAdjust="spacingAndGlyphs" fill="#1c1c1c" stroke="#1c1c1c" stroke-width="0.3" text-anchor="middle" transform="translate(891.8,429.5) rotate(-90)" dy="2.16">R18</text>
<text x="0" y="0" font-size="4.5" textLength="3" lengthAdjust="spacingAndGlyphs" fill="#1c1c1c" stroke="#1c1c1c" stroke-width="0.3" text-anchor="middle" transform="translate(898.8,432.5) rotate(-90)" dy="1.6199999999999999">1</text>
<text x="646.7" y="167.5" font-size="5.5" textLength="63.299999999999955" lengthAdjust="spacingAndGlyphs" fill="#1c1c1c" stroke="#1c1c1c" stroke-width="0.3">.step param sw list 0 1</text>
<text x="646.7" y="178.2" font-size="5.5" textLength="74.29999999999995" lengthAdjust="spacingAndGlyphs" fill="#1c1c1c" stroke="#1c1c1c" stroke-width="0.3">.tran 0 170m 140m startup</text>
<text x="737.5" y="184.2" font-size="5.8" textLength="34.89999999999998" lengthAdjust="spacingAndGlyphs" fill="#3030c0" stroke="#3030c0" stroke-width="0.3">Version NPN</text>
<text x="737.9" y="323" font-size="5.8" textLength="34.89999999999998" lengthAdjust="spacingAndGlyphs" fill="#3030c0" stroke="#3030c0" stroke-width="0.3">Version PNP</text>
<text x="551.2" y="334" font-size="6.5" textLength="22.59999999999991" lengthAdjust="spacingAndGlyphs" fill="#1c1c1c" stroke="#1c1c1c" stroke-width="0.3">set=sw</text>
<text x="971.5" y="334" font-size="6.5" textLength="22.0" lengthAdjust="spacingAndGlyphs" fill="#1c1c1c" stroke="#1c1c1c" stroke-width="0.3">set=sw</text>
<text x="548" y="325" font-size="5" textLength="3" lengthAdjust="spacingAndGlyphs" fill="#1c1c1c" stroke="#1c1c1c" stroke-width="0.3">-</text>
<text x="971" y="325" font-size="5" textLength="3" lengthAdjust="spacingAndGlyphs" fill="#1c1c1c" stroke="#1c1c1c" stroke-width="0.3">-</text>
<text x="527.5" y="343" font-size="7.5" textLength="9.0" lengthAdjust="spacingAndGlyphs" fill="#1c1c1c" stroke="#1c1c1c" stroke-width="0.3">V1</text>
<text x="528.5" y="363.8" font-size="5" textLength="9.0" lengthAdjust="spacingAndGlyphs" fill="#222266" stroke="#222266" stroke-width="0.3">24V</text>
</g>
</g></svg></div></body></html>
